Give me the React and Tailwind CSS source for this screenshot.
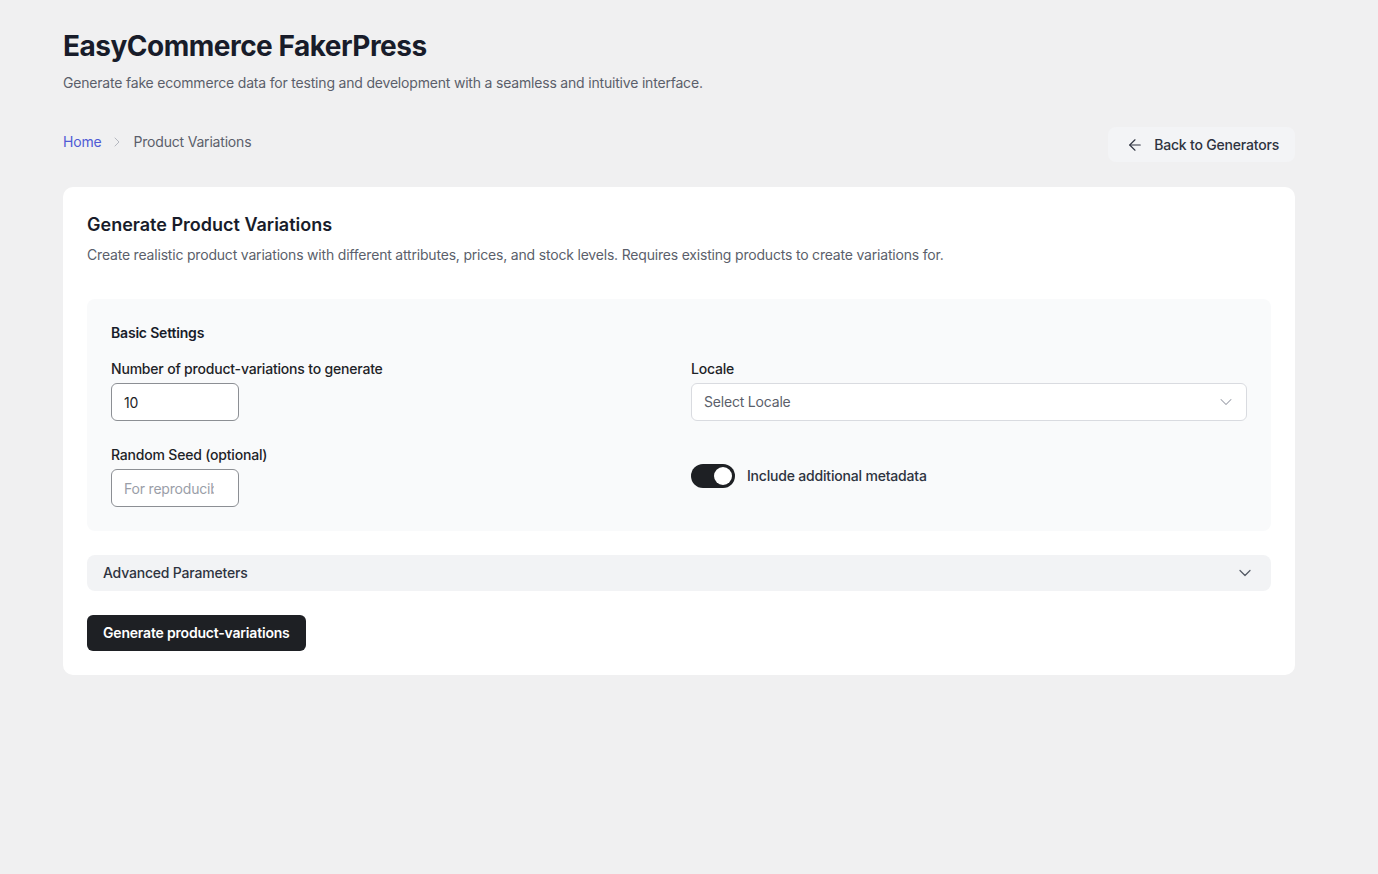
import React, { useState } from "react";
import { ChevronRight, ChevronDown, ArrowLeft } from "lucide-react";

const Field = ({ label, children }) => (
  <div className="flex flex-col">
    <label className="text-sm leading-5 font-medium text-[#1e2327]">{label}</label>
    <div className="mt-1">{children}</div>
  </div>
);

const App = () => {
  const [count, setCount] = useState("10");
  const [meta, setMeta] = useState(true);

  return (
    <div
      className="min-h-screen bg-[#f0f0f1] pl-[63px] pr-[83px] pt-[29px] pb-10 tracking-[-0.012em]"
      style={{ fontFamily: "Inter, 'Noto Sans', sans-serif" }}
    >
      <h1 className="text-[28px] leading-[34px] font-bold tracking-[-0.018em] text-[#181c2a]">
        EasyCommerce FakerPress
      </h1>
      <p className="mt-[10px] text-sm leading-5 text-[#5b5f6b]">
        Generate fake ecommerce data for testing and development with a seamless and intuitive interface.
      </p>

      <div className="mt-[34px] flex items-start justify-between">
        <nav className="flex items-center gap-2 pt-[5px] text-sm leading-5">
          <a href="#" className="text-[#4f5bd5]">Home</a>
          <ChevronRight className="h-4 w-4 text-[#b5b8c0]" strokeWidth={1.5} />
          <span className="text-[#5b5f6b]">Product Variations</span>
        </nav>
        <button className="flex h-[35px] items-center gap-[10px] rounded-lg bg-[#f3f4f6] pl-[18px] pr-4 text-sm font-medium text-[#2e3340]">
          <ArrowLeft className="h-[18px] w-[18px]" strokeWidth={1.5} />
          Back to Generators
        </button>
      </div>

      <div className="mt-[25px] rounded-[10px] bg-white p-6">
        <h2 className="text-lg leading-7 font-semibold tracking-normal text-[#181c2a]">
          Generate Product Variations
        </h2>
        <p className="mt-1.5 text-sm leading-5 text-[#5b5f6b]">
          Create realistic product variations with different attributes, prices, and stock levels. Requires existing products to create variations for.
        </p>

        <div className="mt-[34px] rounded-lg bg-[#f9fafb] p-6">
          <h3 className="text-sm leading-5 font-semibold text-[#181c2a]">Basic Settings</h3>
          <div className="mt-4 grid grid-cols-2 gap-x-6 gap-y-6">
            <Field label="Number of product-variations to generate">
              <input
                type="text"
                value={count}
                onChange={(e) => setCount(e.target.value)}
                className="h-[38px] w-32 rounded-md border border-[#8c8f94] bg-white px-3 text-sm text-[#1e2327] outline-none"
              />
            </Field>
            <Field label="Locale">
              <div className="flex h-[38px] w-full items-center justify-between rounded-md border border-[#d9dbe0] bg-white pl-3 pr-[10px] text-sm text-[#5b5f6b]">
                <span>Select Locale</span>
                <ChevronDown className="h-5 w-5 text-[#9a9ea8]" strokeWidth={1.25} />
              </div>
            </Field>
            <Field label="Random Seed (optional)">
              <input
                type="text"
                placeholder="For reproducibility"
                className="h-[38px] w-32 rounded-md border border-[#8c8f94] bg-white pl-3 pr-6 text-sm text-[#1e2327] placeholder:text-[#9a9ea8] outline-none"
              />
            </Field>
            <div className="flex items-center gap-3">
              <button
                onClick={() => setMeta(!meta)}
                className={`flex h-6 w-11 items-center rounded-full px-[3px] ${meta ? "justify-end bg-[#1e2024]" : "justify-start bg-[#d1d5db]"}`}
              >
                <span className="h-[18px] w-[18px] rounded-full bg-white" />
              </button>
              <span className="text-sm font-medium text-[#2e3340]">Include additional metadata</span>
            </div>
          </div>
        </div>

        <div className="mt-6 flex h-9 items-center justify-between rounded-lg bg-[#f2f3f5] pl-4 pr-4">
          <span className="text-sm font-medium text-[#2e3340]">Advanced Parameters</span>
          <ChevronDown className="h-5 w-5 text-[#555b66]" strokeWidth={1.5} />
        </div>

        <button className="mt-6 h-9 rounded-md bg-[#1e2024] px-4 text-sm font-semibold text-white">
          Generate product-variations
        </button>
      </div>
    </div>
  );
};

export default App;
